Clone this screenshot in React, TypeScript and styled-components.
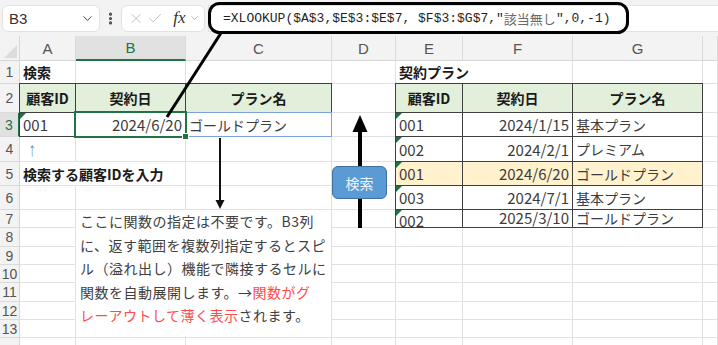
import React from "react";
import styled, { createGlobalStyle, css } from "styled-components";
import { ChevronDown, X, Check, EllipsisVertical } from "lucide-react";

const GlobalStyle = createGlobalStyle`
  html, body {
    margin: 0;
    padding: 0;
    background: #f3f3f3;
  }
  body {
    font-family: "Noto Sans CJK JP", "Noto Sans", sans-serif;
  }
`;

// column widths: row header, A..H
const COLS = [20, 56, 110, 146, 64, 67, 110, 130, 15];
// heights of rows 1..14
const ROWS = [23, 29, 24, 25, 24, 24, 18, 19, 18, 18, 19, 18, 18, 18];
const LETTERS = ["A", "B", "C", "D", "E", "F", "G", "H"];

const HEAD = "#e2efda";
const HIT = "#fff2cc";

type CellDef = {
  text?: React.ReactNode;
  bold?: boolean;
  align?: "left" | "center" | "right";
  fill?: string;
  box?: boolean;
  flag?: boolean;
  sel?: boolean;
  spill?: boolean;
  open?: boolean;
  num?: boolean;
  dy?: number;
  glyph?: boolean;
};

const head = (text: string): CellDef => ({ text, bold: true, align: "center", fill: HEAD, box: true });
const id = (text: string, fill?: string): CellDef => ({ text, box: true, flag: true, num: true, fill });
const date = (text: string, fill?: string): CellDef => ({ text, box: true, align: "right", num: true, fill });
const plan = (text: string, fill?: string): CellDef => ({ text, box: true, fill });

const SHEET: Record<number, Record<string, CellDef>> = {
  1: { A: { text: "検索", bold: true }, E: { text: "契約プラン", bold: true, open: true } },
  2: {
    A: head("顧客ID"),
    B: head("契約日"),
    C: head("プラン名"),
    E: head("顧客ID"),
    F: head("契約日"),
    G: head("プラン名"),
  },
  3: {
    A: id("001"),
    B: { ...date("2024/6/20"), sel: true },
    C: { ...plan("ゴールドプラン"), spill: true },
    E: id("001"),
    F: date("2024/1/15"),
    G: plan("基本プラン"),
  },
  4: { A: { text: "↑", glyph: true }, E: id("002"), F: date("2024/2/1"), G: plan("プレミアム") },
  5: {
    A: { text: "検索する顧客IDを入力", bold: true, open: true },
    E: id("001", HIT),
    F: date("2024/6/20", HIT),
    G: plan("ゴールドプラン", HIT),
  },
  6: { E: id("003"), F: date("2024/7/1"), G: plan("基本プラン") },
  7: {
    E: { ...id("002"), dy: 2 },
    F: { ...date("2025/3/10"), dy: -1 },
    G: { ...plan("ゴールドプラン"), dy: -1 },
  },
};

const cellBody = (c: CellDef) => {
  if (c.glyph) return <Glyph>{c.text}</Glyph>;
  if (c.dy) return <Nudge style={{ transform: `translateY(${c.dy}px)` }}>{c.text}</Nudge>;
  return c.text;
};

export default function App() {
  return (
    <Page>
      <GlobalStyle />
      <Toolbar>
        <NameBox>
          B3
          <ChevronDown size={15} color="#444" strokeWidth={1.6} />
        </NameBox>
        <Dots>
          <EllipsisVertical size={15} color="#444" strokeWidth={3} />
        </Dots>
        <FxBox>
          <X size={17} color="#b5b5b5" strokeWidth={1.3} />
          <Check size={17} color="#b5b5b5" strokeWidth={1.3} />
          <Fx>fx</Fx>
          <ChevronDown size={12} color="#999" strokeWidth={1.6} />
        </FxBox>
        <Formula>
          =XLOOKUP($A$3,$E$3:$E$7, $F$3:$G$7,"<Kanji>該当無し</Kanji>",0,-1)
        </Formula>
      </Toolbar>

      <Sheet>
        <Corner />
        {LETTERS.map((l) => (
          <ColHead key={l} $active={l === "B"}>
            {l === "H" ? "" : l}
          </ColHead>
        ))}
        {ROWS.map((_, i) => {
          const r = i + 1;
          return (
            <React.Fragment key={r}>
              {/* row 14 is only a sliver at the bottom edge, its label is out of view */}
              <RowHead $active={r === 3}>{r < ROWS.length ? r : ""}</RowHead>
              {LETTERS.map((l) => {
                const c = SHEET[r]?.[l] ?? {};
                return (
                  <Cell
                    key={l}
                    $bold={c.bold}
                    $align={c.align ?? "left"}
                    $fill={c.fill}
                    $box={c.box}
                    $flag={c.flag}
                    $sel={c.sel}
                    $spill={c.spill}
                    $open={c.open}
                    $num={c.num}
                  >
                    {cellBody(c)}
                  </Cell>
                );
              })}
            </React.Fragment>
          );
        })}
      </Sheet>

      <Note>
        ここに関数の指定は不要です。B3列
        <br />
        に、返す範囲を複数列指定するとスピ
        <br />
        ル（溢れ出し）機能で隣接するセルに
        <br />
        関数を自動展開します。→<Red>関数がグ</Red>
        <br />
        <Red>レーアウトして薄く表示</Red>されます。
      </Note>

      <Callouts width="718" height="345" viewBox="0 0 718 345">
        <rect x="209.5" y="3.5" width="418" height="29" rx="10" fill="none" stroke="#000" strokeWidth="3" />
        <line x1="221" y1="33" x2="167" y2="117" stroke="#000" strokeWidth="3" />
        <line x1="220" y1="138" x2="220" y2="201" stroke="#111" strokeWidth="2" />
        <polygon points="215.5,200 224.5,200 220,209" fill="#111" />
        <line x1="360" y1="228" x2="360" y2="130" stroke="#000" strokeWidth="4" />
        <polygon points="352.5,132 367.5,132 360,115" fill="#000" />
      </Callouts>

      <SearchTag>検索</SearchTag>
    </Page>
  );
}

const Page = styled.div`
  position: relative;
  width: 718px;
  height: 345px;
  overflow: hidden;
  background: #f3f3f3;
`;

const Toolbar = styled.div`
  display: flex;
  align-items: center;
  height: 36px;
  padding-left: 2px;
  box-sizing: border-box;
`;

const NameBox = styled.div`
  width: 98px;
  height: 27px;
  box-sizing: border-box;
  display: flex;
  align-items: center;
  justify-content: space-between;
  padding: 0 4px 0 6px;
  background: #fff;
  border: 1px solid #e2e2e2;
  border-radius: 6px;
  font-family: "Liberation Sans", Arial, sans-serif;
  font-size: 15px;
  color: #333;
`;

const Dots = styled.div`
  width: 21px;
  display: flex;
  justify-content: center;
`;

const FxBox = styled.div`
  width: 84px;
  height: 27px;
  box-sizing: border-box;
  display: flex;
  align-items: center;
  gap: 3px;
  padding: 0 4px 0 6px;
  background: #fff;
  border: 1px solid #e2e2e2;
  border-radius: 6px;
`;

const Fx = styled.span`
  margin-left: 7px;
  font-family: "Liberation Serif", "Times New Roman", serif;
  font-style: italic;
  font-size: 17px;
  color: #333;
`;

const Formula = styled.div`
  flex: 1;
  height: 27px;
  margin-left: 3px;
  box-sizing: border-box;
  display: flex;
  align-items: center;
  padding-left: 14px;
  background: #fff;
  border: 1px solid #e2e2e2;
  border-right: none;
  font-family: "Liberation Mono", "Noto Sans CJK JP", monospace;
  font-size: 13px;
  color: #1f1f1f;
  white-space: pre;
`;

const Kanji = styled.span`
  color: #6a6a6a;
`;

const Sheet = styled.div`
  display: grid;
  grid-template-columns: ${COLS.map((w) => `${w}px`).join(" ")};
  grid-template-rows: 25px ${ROWS.map((h) => `${h}px`).join(" ")};
  background: #fff;
`;

const Corner = styled.div`
  position: relative;
  background: #f3f3f3;
  border-right: 1px solid #d6d6d6;
  border-bottom: 1px solid #d6d6d6;

  &::after {
    content: "";
    position: absolute;
    right: 2px;
    bottom: 2px;
    border-left: 13px solid transparent;
    border-bottom: 13px solid #dcdcdc;
  }
`;

const ColHead = styled.div<{ $active?: boolean }>`
  display: flex;
  align-items: center;
  justify-content: center;
  box-sizing: border-box;
  background: ${({ $active }) => ($active ? "#e1e1e1" : "#f3f3f3")};
  border-right: 1px solid #dadada;
  border-bottom: ${({ $active }) => ($active ? "2px solid #217346" : "1px solid #d6d6d6")};
  font-family: "Liberation Sans", Arial, sans-serif;
  font-size: 15px;
  color: ${({ $active }) => ($active ? "#217346" : "#555")};
`;

const RowHead = styled.div<{ $active?: boolean }>`
  display: flex;
  align-items: center;
  justify-content: center;
  box-sizing: border-box;
  background: ${({ $active }) => ($active ? "#e1e1e1" : "#f3f3f3")};
  border-right: ${({ $active }) => ($active ? "2px solid #217346" : "1px solid #d6d6d6")};
  border-bottom: 1px solid #dadada;
  font-family: "Liberation Sans", Arial, sans-serif;
  font-size: 14px;
  color: ${({ $active }) => ($active ? "#217346" : "#555")};
`;

type CellProps = {
  $bold?: boolean;
  $align: "left" | "center" | "right";
  $fill?: string;
  $box?: boolean;
  $flag?: boolean;
  $sel?: boolean;
  $spill?: boolean;
  $open?: boolean;
  $num?: boolean;
};

const JUSTIFY = { left: "flex-start", center: "center", right: "flex-end" };

const Cell = styled.div<CellProps>`
  position: relative;
  box-sizing: border-box;
  display: flex;
  align-items: center;
  justify-content: ${({ $align }) => JUSTIFY[$align]};
  padding: 0 3px;
  white-space: nowrap;
  background: ${({ $fill }) => $fill ?? "transparent"};
  border-right: 1px solid ${({ $open }) => ($open ? "transparent" : "#e1e1e1")};
  border-bottom: 1px solid #e1e1e1;
  font-size: ${({ $num }) => ($num ? "15px" : "14px")};
  font-weight: ${({ $bold }) => ($bold ? 700 : 400)};
  color: ${({ $bold }) => ($bold ? "#1a1a1a" : "#3c3c3c")};

  ${({ $box }) =>
    $box &&
    css`
      margin: -1px 0 0 -1px;
      border: 1px solid #3f3f3f;
    `}

  ${({ $flag }) =>
    $flag &&
    css`
      &::before {
        content: "";
        position: absolute;
        top: 0;
        left: 0;
        border-top: 6px solid #1e7145;
        border-right: 6px solid transparent;
      }
    `}

  ${({ $spill }) =>
    $spill &&
    css`
      z-index: 2;
      outline: 1px solid #7b9fe0;
      outline-offset: -1px;
    `}

  ${({ $sel }) =>
    $sel &&
    css`
      z-index: 3;
      outline: 2px solid #217346;
      outline-offset: -1px;

      &::after {
        content: "";
        position: absolute;
        right: -4px;
        bottom: -4px;
        width: 5px;
        height: 5px;
        background: #217346;
        border: 1px solid #fff;
      }
    `}
`;

const Nudge = styled.span`
  display: inline-block;
`;

// thin, tall up-arrow like the full-width one in the sheet
const Glyph = styled.span`
  display: inline-block;
  margin-left: 4px;
  font-family: "Liberation Sans", Arial, sans-serif;
  font-size: 20px;
  color: #6f8fb8;
  transform: scaleX(0.7);
`;

const Note = styled.div`
  position: absolute;
  left: 76px;
  top: 210px;
  width: 255px;
  height: 126px;
  box-sizing: border-box;
  padding: 0 0 0 4px;
  background: #fff;
  font-size: 14px;
  line-height: 23.5px;
  letter-spacing: 0.5px;
  color: #404040;
  white-space: nowrap;
  z-index: 5;
`;

const Red = styled.span`
  color: #ff4b4b;
`;

const Callouts = styled.svg`
  position: absolute;
  left: 0;
  top: 0;
  pointer-events: none;
  z-index: 10;
`;

const SearchTag = styled.div`
  position: absolute;
  left: 332px;
  top: 166px;
  width: 55px;
  height: 33px;
  box-sizing: border-box;
  display: flex;
  align-items: center;
  justify-content: center;
  background: #5b9bd5;
  border: 1.5px solid #3e6f9e;
  border-radius: 6px;
  font-size: 14px;
  color: #eef4fb;
  z-index: 11;
`;
